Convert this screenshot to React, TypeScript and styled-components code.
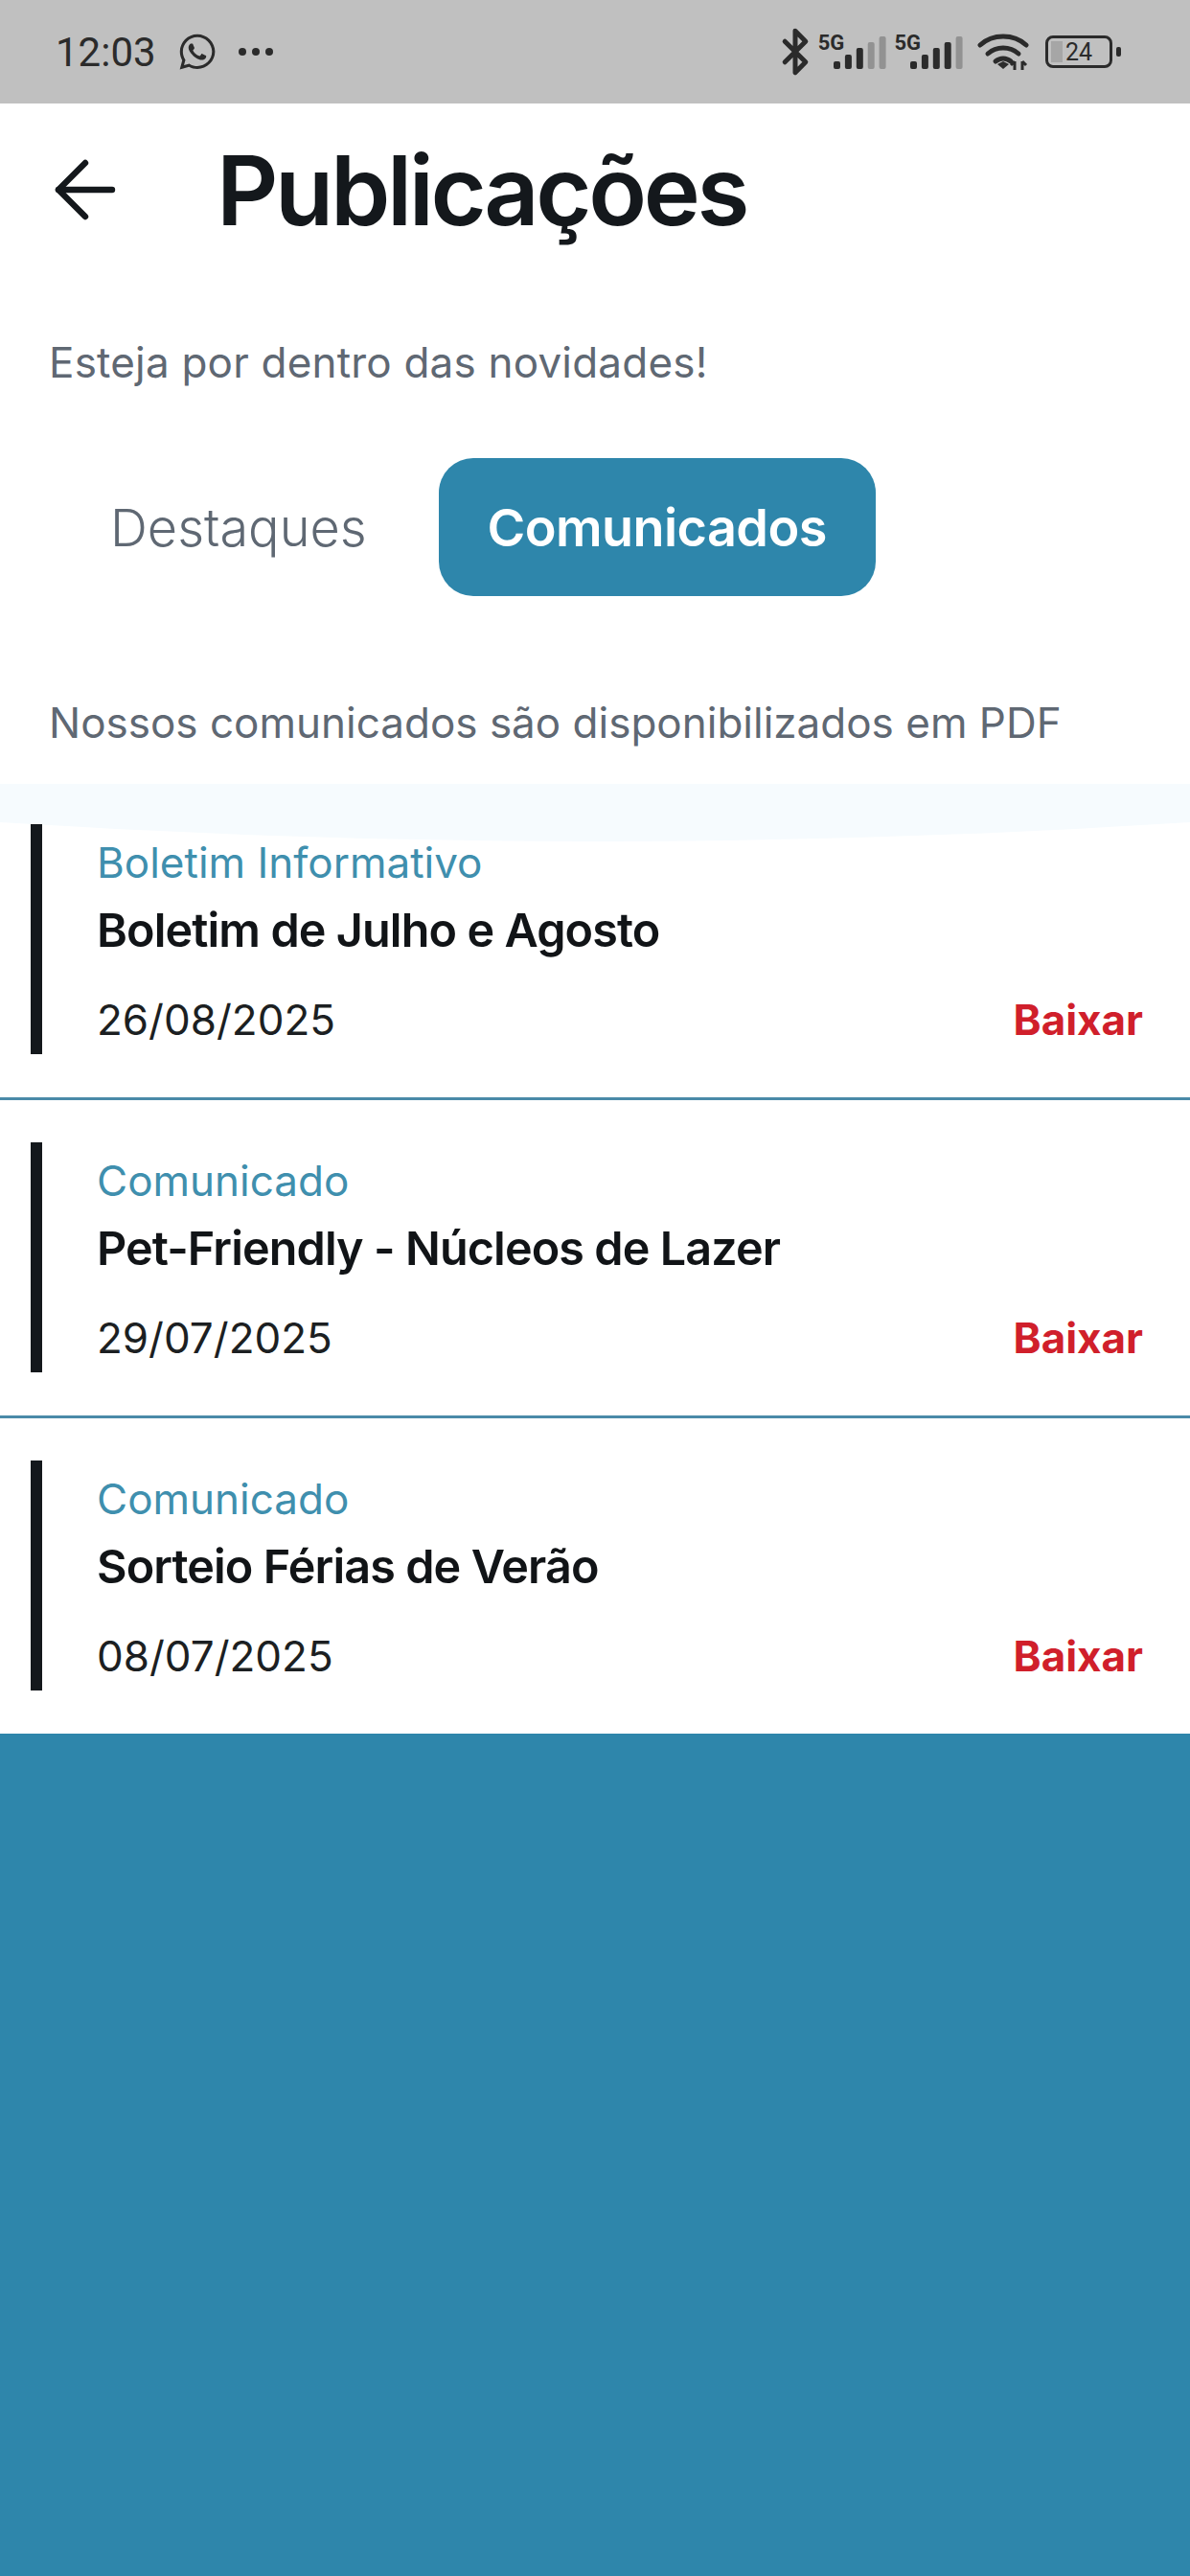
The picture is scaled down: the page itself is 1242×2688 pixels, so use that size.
import React, { FC } from "react";
import styled, { createGlobalStyle } from "styled-components";
import { ArrowLeft, Bluetooth } from "lucide-react";
import { FaWhatsapp } from "react-icons/fa";

const BLUE = "#2e86ab";
const INK = "#14181c";
const GREY = "#5f6873";
const ICON = "#2b2b2b";

interface Publication {
  category: string;
  title: string;
  date: string;
}

const publications: Publication[] = [
  { category: "Boletim Informativo", title: "Boletim de Julho e Agosto", date: "26/08/2025" },
  { category: "Comunicado", title: "Pet-Friendly - Núcleos de Lazer", date: "29/07/2025" },
  { category: "Comunicado", title: "Sorteio Férias de Verão", date: "08/07/2025" },
];

const barHeights = [8, 15, 22, 28, 34];

const SignalBars: FC<{ level: number }> = ({ level }) => (
  <svg width="55" height="34" viewBox="0 0 55 34">
    {barHeights.map((h, i) => (
      <rect
        key={h}
        x={i * 11.9}
        y={34 - h}
        width="7"
        height={h}
        rx="2"
        fill={i < level ? ICON : "#929292"}
      />
    ))}
  </svg>
);

const WifiIcon: FC = () => (
  <svg width="54" height="40" viewBox="0 0 54 40" fill="none">
    <path d="M3 13C16 1 38 1 51 13" stroke={ICON} strokeWidth="5" strokeLinecap="round" />
    <path d="M11 22c9-8 23-8 32 0" stroke={ICON} strokeWidth="5" strokeLinecap="round" />
    <path d="M19 30c5-4 11-4 16 0" stroke={ICON} strokeWidth="5" strokeLinecap="round" />
    <path d="M21 33l6-3 6 3-6 5z" fill={ICON} />
    <path d="M39 39v-9M35 34l4-4M47 39v-9M47 30l4 4" stroke={ICON} strokeWidth="3" />
  </svg>
);

const StatusIcons: FC = () => (
  <StatusRight>
    <BluetoothIcon size={52} color={ICON} strokeWidth={2.3} />
    <Signal>
      <NetworkLabel>5G</NetworkLabel>
      <SignalBars level={3} />
    </Signal>
    <Signal>
      <NetworkLabel>5G</NetworkLabel>
      <SignalBars level={4} />
    </Signal>
    <WifiSlot>
      <WifiIcon />
    </WifiSlot>
    <Battery>
      <BatteryBody>
        <BatteryLevel />
        <BatteryText>24</BatteryText>
      </BatteryBody>
      <BatteryNub />
    </Battery>
  </StatusRight>
);

const PublicationCard: FC<{ item: Publication }> = ({ item }) => (
  <Card>
    <Accent />
    <CardBody>
      <Category>{item.category}</Category>
      <CardTitle>{item.title}</CardTitle>
      <CardFooter>
        <DateText>{item.date}</DateText>
        <Download>Baixar</Download>
      </CardFooter>
    </CardBody>
  </Card>
);

const App: FC = () => (
  <Root>
    <GlobalStyle />
    <StatusBar>
      <StatusLeft>
        <Clock>12:03</Clock>
        <FaWhatsapp size={42} color={ICON} />
        <Dots>
          <Dot />
          <Dot />
          <Dot />
        </Dots>
      </StatusLeft>
      <StatusIcons />
    </StatusBar>
    <Header>
      <BackButton>
        <ArrowLeft size={96} color={INK} strokeWidth={1.6} />
      </BackButton>
      <Title>Publicações</Title>
    </Header>
    <Subtitle>Esteja por dentro das novidades!</Subtitle>
    <Tabs>
      <Tab>Destaques</Tab>
      <Tab $active>Comunicados</Tab>
    </Tabs>
    <Description>Nossos comunicados são disponibilizados em PDF</Description>
    <List>
      <Wave viewBox="0 0 1242 60" preserveAspectRatio="none">
        <path d="M0 0H1242V40Q621 80 0 40Z" fill="#f6fbfe" />
      </Wave>
      {publications.map((item) => (
        <ListItem key={item.title}>
          <PublicationCard item={item} />
        </ListItem>
      ))}
    </List>
    <Footer />
  </Root>
);

export default App;

const GlobalStyle = createGlobalStyle`
  html, body {
    margin: 0;
    padding: 0;
    background: #ffffff;
  }
  * {
    box-sizing: border-box;
  }
`;

const Root = styled.div`
  width: 1242px;
  height: 2688px;
  display: flex;
  flex-direction: column;
  background: #ffffff;
  font-family: Inter, "Liberation Sans", sans-serif;
  overflow: hidden;
`;

const StatusBar = styled.div`
  height: 108px;
  flex: none;
  background: #c0c0c0;
  display: flex;
  align-items: center;
  justify-content: space-between;
  padding: 0 72px 0 58px;
`;

const StatusLeft = styled.div`
  display: flex;
  align-items: center;
  gap: 22px;
`;

const Clock = styled.span`
  font-family: Roboto, sans-serif;
  font-size: 42px;
  color: ${ICON};
`;

const Dots = styled.div`
  display: flex;
  gap: 6px;
`;

const Dot = styled.span`
  width: 8px;
  height: 8px;
  border-radius: 50%;
  background: ${ICON};
`;

const StatusRight = styled.div`
  display: flex;
  align-items: center;
  gap: 8px;
`;

const BluetoothIcon = styled(Bluetooth)`
  margin-right: -10px;
`;

const Signal = styled.div`
  display: flex;
  align-items: flex-end;
  height: 36px;
`;

const NetworkLabel = styled.span`
  align-self: flex-start;
  font-family: Roboto, sans-serif;
  font-size: 22px;
  font-weight: 700;
  line-height: 18px;
  color: ${ICON};
  margin-right: -11px;
`;

const WifiSlot = styled.div`
  display: flex;
  margin: 0 7px;
`;

const Battery = styled.div`
  display: flex;
  align-items: center;
  gap: 4px;
  margin-left: 2px;
`;

const BatteryBody = styled.div`
  position: relative;
  width: 70px;
  height: 34px;
  border: 3px solid ${ICON};
  border-radius: 8px;
  display: flex;
  align-items: center;
  justify-content: center;
`;

const BatteryLevel = styled.span`
  position: absolute;
  left: 3px;
  top: 3px;
  bottom: 3px;
  width: 12px;
  background: #a6a6a6;
`;

const BatteryText = styled.span`
  position: relative;
  font-family: Roboto, sans-serif;
  font-size: 25px;
  color: ${ICON};
`;

const BatteryNub = styled.span`
  width: 5px;
  height: 10px;
  border-radius: 2px;
  background: ${ICON};
`;

const Header = styled.div`
  height: 180px;
  flex: none;
  display: flex;
  align-items: center;
  padding-left: 41px;
`;

const BackButton = styled.div`
  width: 185px;
  display: flex;
  align-items: center;
`;

const Title = styled.h1`
  margin: 0;
  font-size: 100px;
  font-weight: 600;
  letter-spacing: -3.4px;
  color: ${INK};
`;

const Subtitle = styled.p`
  margin: 60px 0 0;
  padding-left: 51px;
  font-size: 44px;
  line-height: 60px;
  letter-spacing: 0.2px;
  color: ${GREY};
`;

const Tabs = styled.div`
  display: flex;
  align-items: center;
  gap: 24px;
  margin-top: 70px;
  padding-left: 64px;
`;

const Tab = styled.div<{ $active?: boolean }>`
  height: 144px;
  padding: 0 51px;
  display: flex;
  align-items: center;
  border-radius: 36px;
  font-size: 54px;
  font-weight: ${(p) => (p.$active ? 600 : 300)};
  letter-spacing: ${(p) => (p.$active ? "-0.6px" : "0")};
  background: ${(p) => (p.$active ? BLUE : "transparent")};
  color: ${(p) => (p.$active ? "#ffffff" : GREY)};
`;

const Description = styled.p`
  margin: 102px 0 0;
  padding-left: 51px;
  font-size: 44px;
  line-height: 60px;
  color: ${GREY};
`;

const List = styled.div`
  position: relative;
  flex: none;
  margin-top: 34px;
  padding-top: 42px;
`;

const Wave = styled.svg`
  position: absolute;
  top: 0;
  left: 0;
  width: 1242px;
  height: 60px;
`;

const ListItem = styled.div`
  position: relative;
  padding: 44px 0 45px;
  border-bottom: 3px solid #4a8aa8;
  &:first-of-type {
    padding-top: 0;
  }
  &:last-of-type {
    padding-bottom: 45px;
    border-bottom: none;
  }
`;

const Card = styled.div`
  display: flex;
  height: 240px;
  padding-left: 32px;
`;

const Accent = styled.div`
  width: 12px;
  flex: none;
  background: ${INK};
`;

const CardBody = styled.div`
  flex: 1;
  display: flex;
  flex-direction: column;
  padding: 16px 49px 0 57px;
`;

const Category = styled.div`
  font-size: 44px;
  line-height: 48px;
  color: #3f8fae;
`;

const CardTitle = styled.div`
  margin-top: 19px;
  font-size: 48.5px;
  line-height: 56px;
  font-weight: 600;
  letter-spacing: -0.9px;
  color: #111417;
`;

const CardFooter = styled.div`
  display: flex;
  justify-content: space-between;
  align-items: center;
  margin-top: 40px;
`;

const DateText = styled.span`
  font-size: 44px;
  line-height: 50px;
  color: #1c1f22;
`;

const Download = styled.span`
  font-size: 44px;
  line-height: 50px;
  font-weight: 700;
  color: #d01f2b;
`;

const Footer = styled.div`
  flex: 1;
  background: ${BLUE};
`;
